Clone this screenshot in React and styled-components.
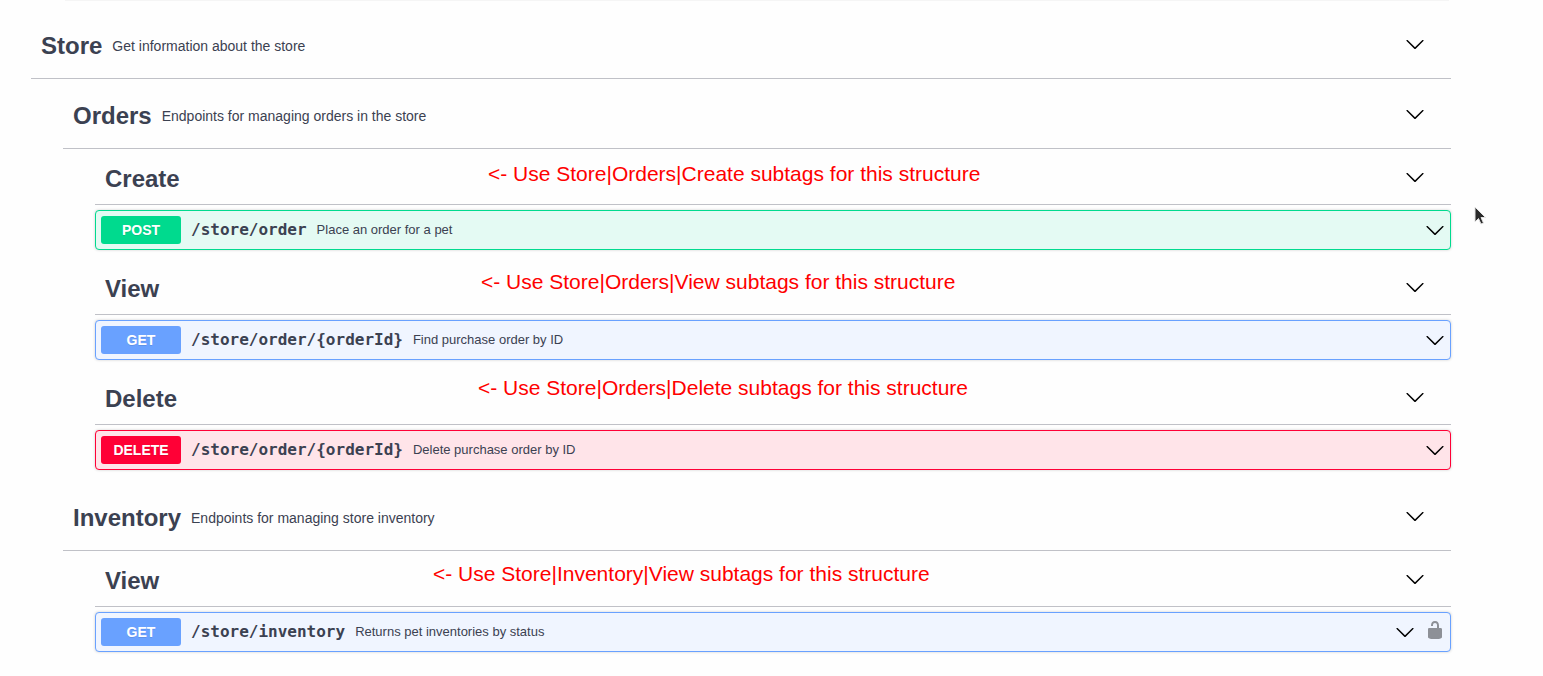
import React from "react";
import styled, { createGlobalStyle } from "styled-components";

const Global = createGlobalStyle`
  *, *::before, *::after { box-sizing: border-box; }
  body {
    margin: 0;
    background: #fefefe;
    color: #3b4151;
    font-family: "Liberation Sans", Arial, sans-serif;
  }
`;

const Page = styled.main`
  position: relative;
  padding: 0 92px 24px 31px;
`;

const PreviousEdge = styled.div`
  height: 1px;
  margin: 0 2px 8px 34px;
  background: #f5f5f5;
`;

const Group = styled.section`
  padding-left: ${(p) => (p.$nested ? "32px" : "0")};
  padding-bottom: ${(p) => (p.$nested ? "2px" : "0")};
`;

const Leaf = styled.section`
  padding-left: 32px;
`;

const TagBar = styled.header`
  position: relative;
  display: flex;
  align-items: center;
  height: ${(p) => (p.$compact ? "56px" : "70px")};
  padding: 0 26px 0 10px;
  border-bottom: 1px solid #c0c1c7;
`;

const TagName = styled.h3`
  margin: 0;
  font-size: 24px;
  line-height: 28px;
  font-weight: 700;
  padding-top: 4px;
`;

const TagInfo = styled.p`
  margin: 0;
  padding: 4px 10px 0;
  font-size: 14px;
  line-height: 20px;
`;

const IconButton = styled.button`
  display: flex;
  margin: 0 0 0 auto;
  padding: 0;
  border: 0;
  background: none;
  color: #000;
  cursor: pointer;
`;

const Note = styled.span`
  position: absolute;
  left: ${(p) => p.$left}px;
  top: ${(p) => p.$top}px;
  font-size: 21px;
  line-height: 26px;
  white-space: nowrap;
  color: #f00;
`;

const tones = {
  POST: { main: "#00da8e", soft: "#e4faf3" },
  GET: { main: "#69a1ff", soft: "#f0f5ff" },
  DELETE: { main: "#ff0036", soft: "#ffe4e9" },
};

const Operation = styled.div`
  display: flex;
  align-items: center;
  height: 40px;
  margin: 5px 0 9px;
  padding: 0 5px;
  border: 1px solid ${(p) => tones[p.$method].main};
  border-radius: 4px;
  background: ${(p) => tones[p.$method].soft};
  box-shadow: 0 0 3px rgba(0, 0, 0, 0.19);
`;

const Method = styled.span`
  width: 80px;
  border-radius: 3px;
  background: ${(p) => tones[p.$method].main};
  color: #fff;
  font-size: 14px;
  line-height: 28px;
  font-weight: 700;
  text-align: center;
  text-shadow: 0 1px 0 rgba(0, 0, 0, 0.1);
`;

const Path = styled.a`
  padding: 0 10px;
  color: #3b4151;
  font-family: "DejaVu Sans Mono", monospace;
  font-size: 16px;
  line-height: 20px;
  font-weight: 700;
  text-decoration: none;
`;

const Summary = styled.span`
  font-size: 13px;
  line-height: 20px;
`;

const Controls = styled.div`
  display: flex;
  align-items: center;
  gap: 10px;
  margin-left: auto;
`;

const Lock = styled(IconButton)`
  padding-bottom: 4px;
  color: #8d9097;
`;

const Pointer = styled.svg`
  position: absolute;
  left: 1473px;
  top: 206px;
`;

const Chevron = () => (
  <svg width="20" height="20" viewBox="0 0 20 20" fill="currentColor" aria-hidden="true">
    <path d="M17.418 6.109c.272-.268.709-.268.979 0s.271.701 0 .969l-7.908 7.83c-.27.268-.707.268-.979 0l-7.908-7.83c-.27-.268-.27-.701 0-.969.271-.268.709-.268.979 0L10 13.25l7.418-7.141z" />
  </svg>
);

const Unlocked = () => (
  <svg width="20" height="20" viewBox="0 0 20 20" fill="currentColor" aria-hidden="true">
    <path d="M15.8 8H14V5.6C14 2.703 12.665 1 10 1 7.334 1 6 2.703 6 5.6V6h2v-.801C8 3.754 8.797 3 10 3c1.203 0 2 .754 2 2.199V8H4c-.553 0-1 .646-1 1.199V17c0 .549.428 1.139.951 1.307l1.197.387C5.672 18.861 6.55 19 7.1 19h5.8c.549 0 1.428-.139 1.951-.307l1.196-.387c.524-.167.953-.757.953-1.306V9.199C17 8.646 16.352 8 15.8 8z" />
  </svg>
);

function Tag({ name, info, note, compact }) {
  return (
    <TagBar $compact={compact}>
      <TagName>{name}</TagName>
      {info && <TagInfo>{info}</TagInfo>}
      <IconButton type="button" aria-label={`Expand ${name}`}>
        <Chevron />
      </IconButton>
      {note && (
        <Note $left={note.left} $top={note.top}>
          {note.text}
        </Note>
      )}
    </TagBar>
  );
}

function Endpoint({ method, path, summary, secured }) {
  return (
    <Operation $method={method}>
      <Method $method={method}>{method}</Method>
      <Path href={`#${path}`}>{path}</Path>
      <Summary>{summary}</Summary>
      <Controls>
        <IconButton type="button" aria-label={`Expand ${method} ${path}`}>
          <Chevron />
        </IconButton>
        {secured && (
          <Lock type="button" aria-label="Authorize">
            <Unlocked />
          </Lock>
        )}
      </Controls>
    </Operation>
  );
}

const groups = [
  {
    name: "Orders",
    info: "Endpoints for managing orders in the store",
    leaves: [
      {
        name: "Create",
        note: { left: 393, top: 12, text: "<- Use Store|Orders|Create subtags for this structure" },
        op: { method: "POST", path: "/store/order", summary: "Place an order for a pet" },
      },
      {
        name: "View",
        note: { left: 386, top: 10, text: "<- Use Store|Orders|View subtags for this structure" },
        op: { method: "GET", path: "/store/order/{orderId}", summary: "Find purchase order by ID" },
      },
      {
        name: "Delete",
        note: { left: 383, top: 6, text: "<- Use Store|Orders|Delete subtags for this structure" },
        op: { method: "DELETE", path: "/store/order/{orderId}", summary: "Delete purchase order by ID" },
      },
    ],
  },
  {
    name: "Inventory",
    info: "Endpoints for managing store inventory",
    leaves: [
      {
        name: "View",
        note: { left: 338, top: 10, text: "<- Use Store|Inventory|View subtags for this structure" },
        op: { method: "GET", path: "/store/inventory", summary: "Returns pet inventories by status", secured: true },
      },
    ],
  },
];

export default function App() {
  return (
    <>
      <Global />
      <Page>
        <PreviousEdge />
        <Group>
          <Tag name="Store" info="Get information about the store" />
          {groups.map((group) => (
            <Group $nested key={group.name}>
              <Tag name={group.name} info={group.info} />
              {group.leaves.map((leaf) => (
                <Leaf key={leaf.name}>
                  <Tag compact name={leaf.name} note={leaf.note} />
                  <Endpoint {...leaf.op} />
                </Leaf>
              ))}
            </Group>
          ))}
        </Group>
        <Pointer width="14" height="22" viewBox="0 0 14 22" aria-hidden="true">
          <path d="M2 1v15l3.500-3.500 2.500 5.500 2.500-1-2.500-5.500h4.500z" fill="#2b2b2b" stroke="#e4e4e4" />
        </Pointer>
      </Page>
    </>
  );
}
